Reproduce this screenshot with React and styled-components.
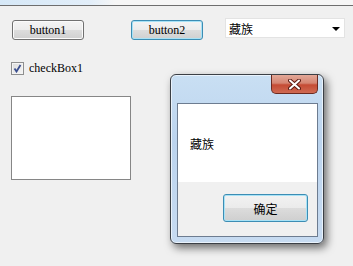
import React from "react";
import styled, { createGlobalStyle } from "styled-components";

const Global = createGlobalStyle`
  html, body {
    margin: 0;
    padding: 0;
    background: #f0f0f0;
  }
`;

export default function App() {
  return (
    <>
      <Global />
      <Page>
        <TopStrip />
        <Toolbar>
          <Button>button1</Button>
          <Button focused>button2</Button>
          <Combo>
            <span>藏族</span>
            <Arrow />
          </Combo>
        </Toolbar>
        <CheckRow>
          <CheckBox>
            <svg width="9" height="9" viewBox="0 0 9 9">
              <path d="M1.5 4.5 L3.5 7.5 L7.5 1" fill="none" stroke="#3b4f8f" strokeWidth="1.8" />
            </svg>
          </CheckBox>
          <Label>checkBox1</Label>
        </CheckRow>
        <TextBox />

        <Window>
          <TitleBar>
            <CloseButton>
              <svg width="13" height="11" viewBox="0 0 13 11">
                <path d="M2 1.5 L11 9.5 M11 1.5 L2 9.5" stroke="#5a1a12" strokeWidth="4" strokeLinecap="round" />
                <path d="M2 1.5 L11 9.5 M11 1.5 L2 9.5" stroke="#ffffff" strokeWidth="2" strokeLinecap="round" />
              </svg>
            </CloseButton>
          </TitleBar>
          <Client>
            <Message>藏族</Message>
            <Footer>
              <DialogButton>确定</DialogButton>
            </Footer>
          </Client>
        </Window>
      </Page>
    </>
  );
}

const Page = styled.div`
  position: relative;
  width: 353px;
  height: 266px;
  background: #f0f0f0;
  overflow: hidden;
`;

const TopStrip = styled.div`
  height: 5px;
  background: linear-gradient(90deg, #d6e8f7 0px, #e2eef9 90px, #f6f6f6 115px, #f6f6f6 100%);
  border-bottom: 1px solid #6e6e6e;
`;

const Toolbar = styled.div`
  display: flex;
  align-items: flex-start;
  padding: 12px 0 0 12px;
`;

const Button = styled.div`
  box-sizing: border-box;
  width: 72px;
  height: 20px;
  margin-top: 2px;
  margin-right: ${(p) => (p.focused ? "22px" : "47px")};
  display: flex;
  align-items: center;
  justify-content: center;
  border: 1px solid ${(p) => (p.focused ? "#3c8db4" : "#707070")};
  border-radius: 3px;
  box-shadow: inset 0 0 0 1px ${(p) => (p.focused ? "#a8e2f6" : "#fbfbfb")};
  background: linear-gradient(#f4f4f4 0%, #ececec 50%, #dddddd 51%, #d0d0d0 100%);
  font-family: "Liberation Serif", serif;
  font-size: 12px;
  color: #000;
`;

const Combo = styled.div`
  box-sizing: border-box;
  width: 120px;
  height: 20px;
  display: flex;
  align-items: center;
  justify-content: space-between;
  padding: 0 4px 0 3px;
  background: #fff;
  border: 1px solid #e3e3e3;
  font-family: "Noto Sans CJK SC", sans-serif;
  font-size: 12px;
  color: #000;
`;

const Arrow = styled.div`
  width: 0;
  height: 0;
  border-left: 4px solid transparent;
  border-right: 4px solid transparent;
  border-top: 4px solid #000;
  margin-top: 1px;
`;

const CheckRow = styled.div`
  display: flex;
  align-items: center;
  gap: 5px;
  height: 14px;
  padding: 21px 0 0 11px;
`;

const CheckBox = styled.div`
  box-sizing: border-box;
  width: 13px;
  height: 13px;
  border: 1px solid #8e8f8f;
  background: linear-gradient(135deg, #dcdcdc, #f6f6f6);
  box-shadow: inset 0 0 0 1px #f4f4f4;
  display: flex;
  align-items: center;
  justify-content: center;
`;

const Label = styled.span`
  font-family: "Liberation Serif", serif;
  font-size: 12px;
  color: #000;
`;

const TextBox = styled.div`
  box-sizing: border-box;
  width: 120px;
  height: 84px;
  margin: 21px 0 0 11px;
  background: #fff;
  border: 1px solid #868686;
`;

const Window = styled.div`
  position: absolute;
  left: 170px;
  top: 74px;
  box-sizing: border-box;
  width: 154px;
  height: 170px;
  display: flex;
  flex-direction: column;
  border: 1px solid #3b3f45;
  border-radius: 6px;
  background: linear-gradient(#c9dff3 0%, #bcd4ee 40%, #c7dbf1 100%);
  box-shadow: 3px 4px 8px rgba(0, 0, 0, 0.55), inset 0 0 0 1px #e9f2fb;
`;

const TitleBar = styled.div`
  height: 28px;
  display: flex;
  justify-content: flex-end;
  padding-right: 5px;
`;

const CloseButton = styled.div`
  box-sizing: border-box;
  width: 47px;
  height: 19px;
  display: flex;
  align-items: center;
  justify-content: center;
  border: 1px solid #6b2a20;
  border-top: none;
  border-radius: 0 0 5px 5px;
  background: linear-gradient(#e3a898 0%, #d58572 45%, #c54b34 55%, #cf6a52 100%);
`;

const Client = styled.div`
  flex: 1;
  display: flex;
  flex-direction: column;
  margin: 0 5px 6px 6px;
  border: 1px solid #6d7c90;
`;

const Message = styled.div`
  height: 78px;
  display: flex;
  align-items: center;
  padding-left: 12px;
  background: #fff;
  font-family: "Noto Sans CJK SC", sans-serif;
  font-size: 12px;
  color: #000;
`;

const Footer = styled.div`
  flex: 1;
  display: flex;
  justify-content: flex-end;
  align-items: flex-start;
  padding: 12px 9px 0 0;
  background: #f0f0f0;
`;

const DialogButton = styled.div`
  box-sizing: border-box;
  width: 85px;
  height: 28px;
  display: flex;
  align-items: center;
  justify-content: center;
  border: 1px solid #3c8db4;
  border-radius: 3px;
  box-shadow: inset 0 0 0 1px #a8e2f6;
  background: linear-gradient(#f2f2f2 0%, #ebebeb 50%, #dcdcdc 51%, #cfcfcf 100%);
  font-family: "Noto Sans CJK SC", sans-serif;
  font-size: 12px;
  color: #000;
`;
